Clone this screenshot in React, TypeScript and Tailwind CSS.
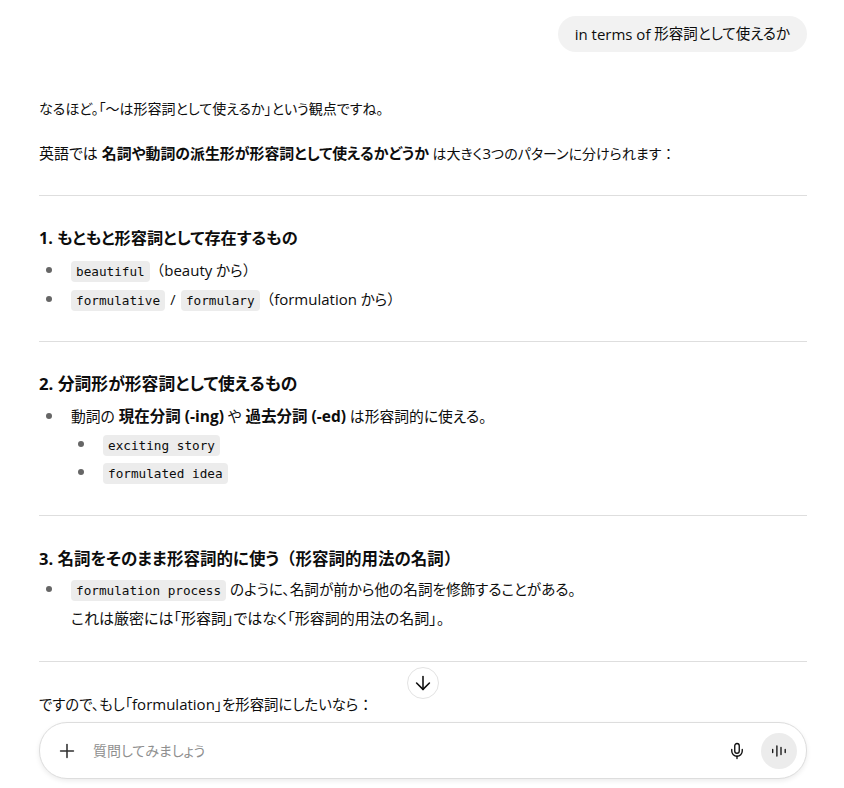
import { ArrowDown, Mic, Plus } from 'lucide-react';
import type { ReactNode } from 'react';

const Code = ({ children }: { children: ReactNode }) => (
  <code className="rounded-[4px] bg-[#ececec] px-[5px] py-[3px] font-['DejaVu_Sans_Mono','Noto_Sans_CJK_JP',monospace] text-[12.7px] text-[#0d0d0d]">
    {children}
  </code>
);

// Latin runs sit a little larger than the Japanese around them
const L = ({ children }: { children: ReactNode }) => <span className="text-[15px]">{children}</span>;

// full-width punctuation, keeps its em box under palt
const Fw = ({ children }: { children: ReactNode }) => (
  <span className="[font-feature-settings:normal]">{children}</span>
);

const Bullet = ({ children, className = 'h-[28.5px]' }: { children: ReactNode; className?: string }) => (
  <li className={`relative pl-[32px] leading-[28px] ${className}`}>
    <span className="absolute left-[7px] top-[11px] size-[6px] rounded-full bg-[#666666]" />
    {children}
  </li>
);

const Heading = ({ children, className = '' }: { children: ReactNode; className?: string }) => (
  <h3 className={`h-[28px] font-bold leading-[28px] ${className}`}>{children}</h3>
);

const Divider = () => <hr className="border-t border-[#dedede]" />;

export default function App() {
  return (
    <div className="relative flex h-[788px] w-[844px] flex-col overflow-hidden bg-white font-['Open_Sans','Noto_Sans_CJK_JP',sans-serif] text-[14px] text-[#0d0d0d] [font-feature-settings:'palt']">
      <div className="flex-1 overflow-hidden pl-[39px] pr-[37px]">
        <div className="flex justify-end pt-[16px]">
          <div className="flex h-[36px] items-center rounded-[18px] bg-[#f2f2f2] px-[17px] text-[14.5px]">
            <L>in terms of&nbsp;</L>形容詞として使えるか
          </div>
        </div>

        <p className="mt-[43px] h-[28px] leading-[28px]">なるほど。「～は形容詞として使えるか」という観点ですね。</p>
        <p className="mt-[16px] h-[28px] leading-[28px]">
          <span className="text-[15px]">英語では </span>
          <strong className="text-[14.9px]">名詞や動詞の派生形が形容詞として使えるかどうか</strong> は大きく<L>3</L>つのパターンに分けられます<Fw>：</Fw>
        </p>

        <div className="mt-[28px]"><Divider /></div>

        <div className="mt-[28px]">
          <Heading className="text-[16.2px]">1. もともと形容詞として存在するもの</Heading>
          <ul className="mt-[4px] text-[14.5px]">
            <Bullet><Code>beautiful</Code><Fw>（</Fw><L>beauty</L> から<Fw>）</Fw></Bullet>
            <Bullet><Code>formulative</Code><span className="mx-[1.5px]"> / </span><Code>formulary</Code><Fw>（</Fw><L>formulation</L> から<Fw>）</Fw></Bullet>
          </ul>
        </div>

        <div className="mt-[28px]"><Divider /></div>

        <div className="mt-[28px]">
          <Heading className="text-[16.8px]">2. 分詞形が形容詞として使えるもの</Heading>
          <ul className="mt-[4px] text-[14.8px]">
            <Bullet className="h-[27.5px]">動詞の <strong className="text-[15.5px]">現在分詞 (-ing)</strong> や <strong className="text-[15.5px]">過去分詞 (-ed)</strong> は形容詞的に使える。</Bullet>
            <Bullet className="ml-[32px] h-[28.5px]"><Code>exciting story</Code></Bullet>
            <Bullet className="ml-[32px] h-[28.5px]"><Code>formulated idea</Code></Bullet>
          </ul>
        </div>

        <div className="mt-[28px]"><Divider /></div>

        <div className="mt-[29px]">
          <Heading className="text-[16.5px]">3. 名詞をそのまま形容詞的に使う<Fw>（</Fw>形容詞的用法の名詞<Fw>）</Fw></Heading>
          <ul className="mt-[2px]">
            <Bullet className="h-auto">
              <span className="block h-[29px] text-[14.6px]"><Code>formulation process</Code> のように、名詞が前から他の名詞を修飾することがある。</span>
              <span className="block h-[28px] text-[15px]">これは厳密には「形容詞」ではなく「形容詞的用法の名詞」。</span>
            </Bullet>
          </ul>
        </div>

        <div className="mt-[29px]"><Divider /></div>

        <p className="mt-[28px] h-[28px] text-[14.4px] leading-[28px]">ですので、もし「<L>formulation</L>」を形容詞にしたいなら<Fw>：</Fw></p>
      </div>

      <button className="absolute left-[407px] top-[667px] flex size-[32px] items-center justify-center rounded-full border border-[#e3e3e3] bg-white">
        <ArrowDown size={22} strokeWidth={1.7} />
      </button>

      <div className="pb-[9px] pl-[39px] pr-[37px]">
        <div className="flex h-[57px] items-center rounded-[28px] border border-[#dddddd] bg-white pl-[16px] pr-[9px] shadow-[0_2px_5px_rgba(0,0,0,0.08)]">
          <Plus size={22} strokeWidth={1.7} className="text-[#303030]" />
          <span className="ml-[15px] flex-1 text-[#8f8f8f]">質問してみましょう</span>
          <Mic size={18} strokeWidth={1.8} className="text-[#0d0d0d]" />
          <div className="ml-[15px] flex size-[36px] items-center justify-center rounded-full bg-[#ececec]">
            <svg width="16" height="16" viewBox="0 0 16 16" fill="none" stroke="#0d0d0d" strokeWidth="1.3" strokeLinecap="round">
              <path d="M1.7 6.5v3M5.9 3v10M10 4.5v7M14.2 6.5v3" />
            </svg>
          </div>
        </div>
      </div>
    </div>
  );
}
